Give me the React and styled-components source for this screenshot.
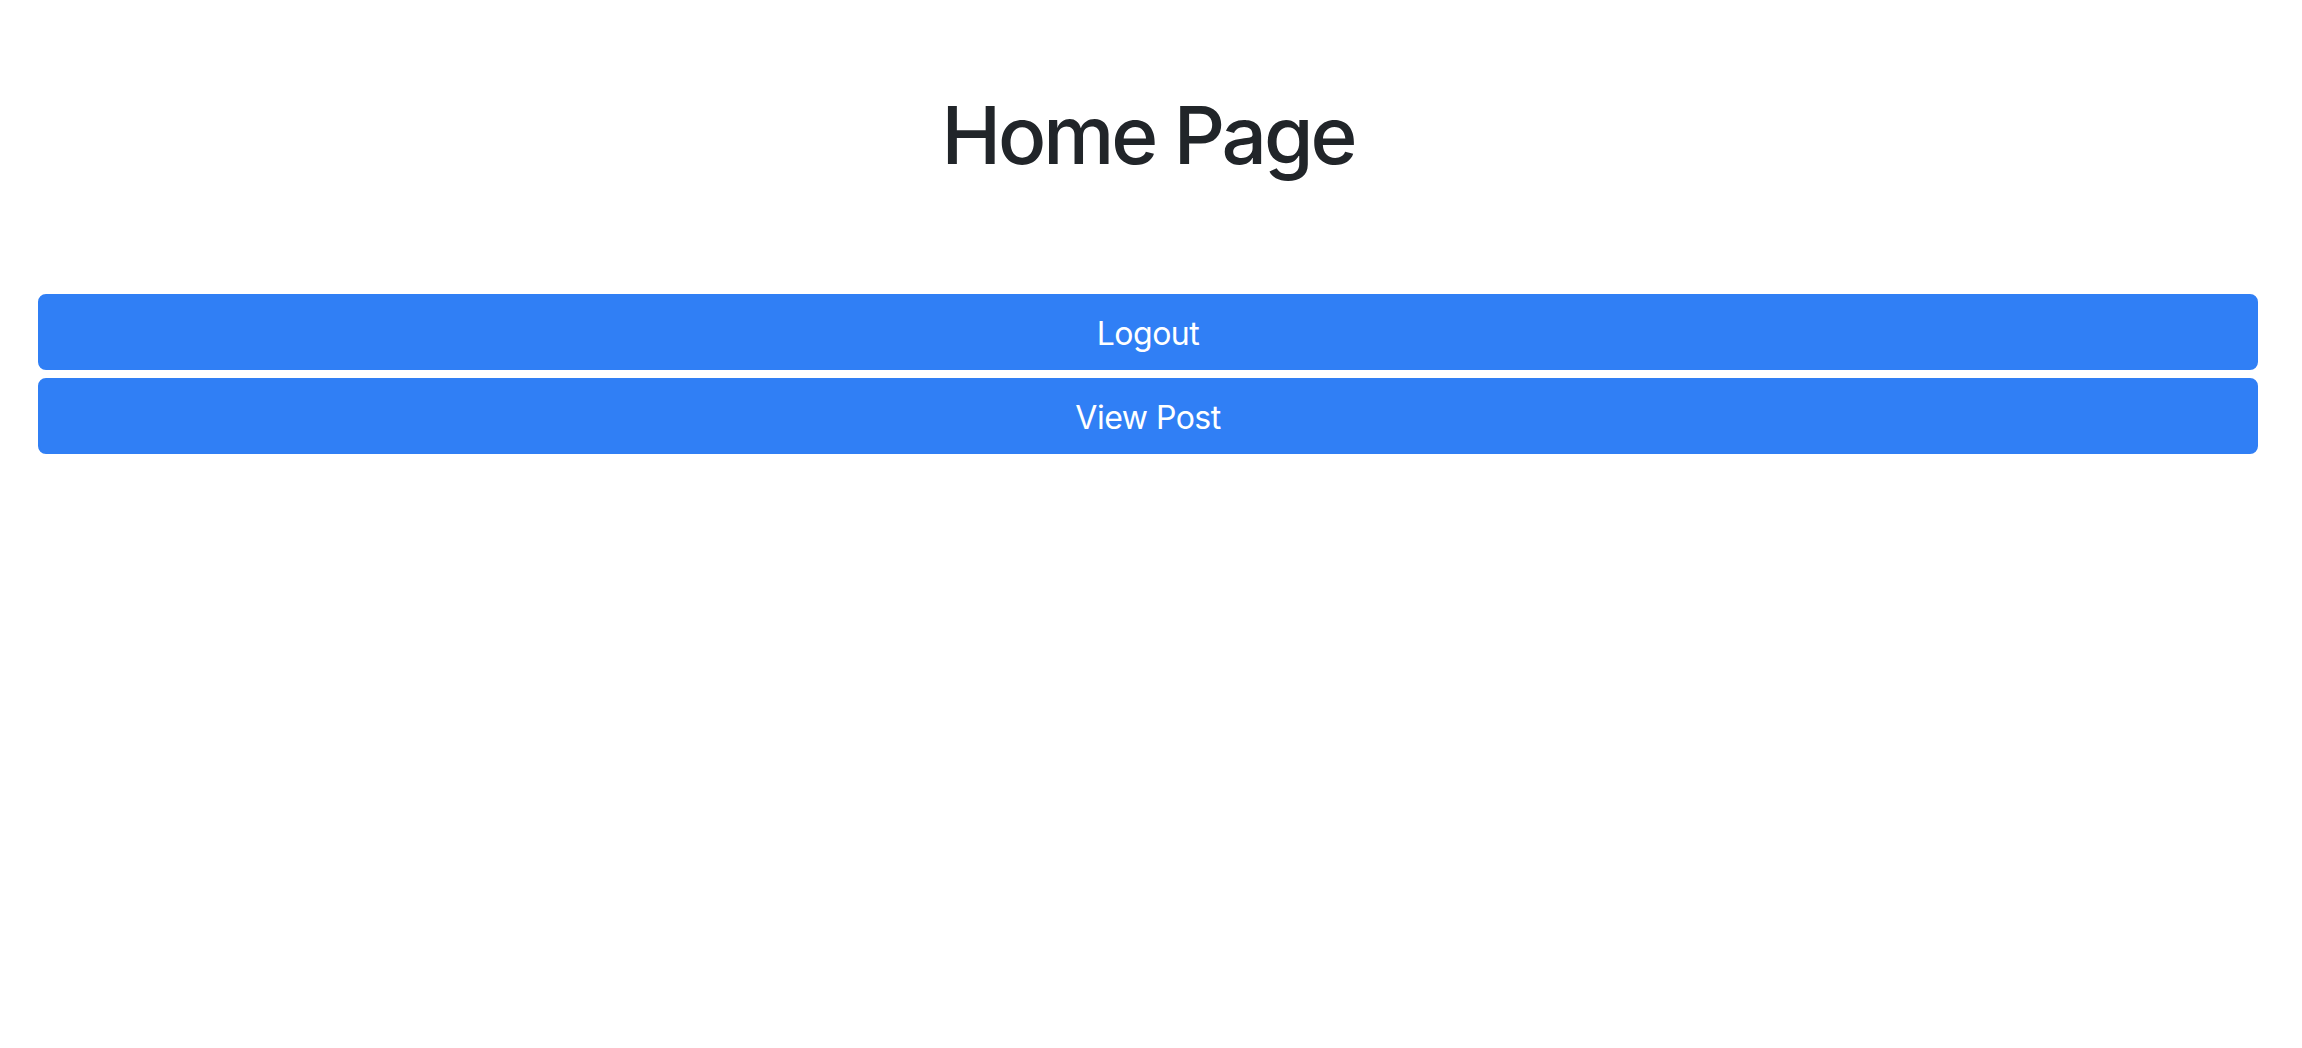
import React from "react";
import styled, { createGlobalStyle } from "styled-components";

const Global = createGlobalStyle`
  html, body { margin: 0; padding: 0; background: #ffffff; }
  body { font-family: Inter, "Noto Sans", "Liberation Sans", sans-serif; color: #212529; }
  * { box-sizing: border-box; }
`;

const Page = styled.main`
  display: flex;
  flex-direction: column;
  padding: 87px 44px 0 38px;
`;

const Title = styled.h1`
  margin: 0 0 111px;
  text-align: center;
  font-size: 80px;
  font-weight: 500;
  letter-spacing: -3px;
  line-height: 96px;
  color: #212529;
`;

const Actions = styled.div`
  display: flex;
  flex-direction: column;
  gap: 8px;
`;

const Button = styled.button`
  display: block;
  width: 100%;
  height: 76px;
  padding: 4px 24px 0;
  border: 2px solid #307ff5;
  border-radius: 8px;
  background: #307ff5;
  color: #ffffff;
  font-family: inherit;
  font-size: 32px;
  letter-spacing: -0.5px;
  line-height: 50px;
  cursor: pointer;
`;

export default function App() {
  return (
    <>
      <Global />
      <Page>
        <Title>Home Page</Title>
        <Actions>
          <Button>Logout</Button>
          <Button>View Post</Button>
        </Actions>
      </Page>
    </>
  );
}
